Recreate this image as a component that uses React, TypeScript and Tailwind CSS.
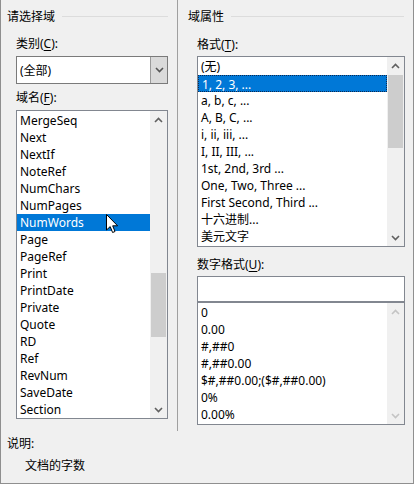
import React from 'react'

// Word "域" (field) dialog, left/right panes.

type Thumb = { offset: number; height: number } | null

function Chevron({ up, color }: { up?: boolean; color: string }) {
  return (
    <svg width="9" height="6" viewBox="0 0 9 6" className="block">
      <polyline
        points={up ? '1,5 4.5,1.5 8,5' : '1,1 4.5,4.5 8,1'}
        fill="none"
        stroke={color}
        strokeWidth="1.6"
      />
    </svg>
  )
}

function ScrollBar({ thumb, disabled }: { thumb: Thumb; disabled?: boolean }) {
  const arrow = disabled ? '#c4c4c4' : '#606060'
  return (
    <div className="w-[17px] shrink-0 flex flex-col bg-[#f0f0f0]">
      <div className="h-[17px] flex items-center justify-center">
        <Chevron up color={arrow} />
      </div>
      <div className="flex-1 flex flex-col">
        {thumb && (
          <>
            <div style={{ height: thumb.offset }} />
            <div className="mx-[1px] bg-[#cdcdcd]" style={{ height: thumb.height }} />
          </>
        )}
      </div>
      <div className="h-[17px] flex items-center justify-center">
        <Chevron color={arrow} />
      </div>
    </div>
  )
}

function ListBox({
  items,
  selected,
  focusRing,
  thumb,
  disabled,
  className,
}: {
  items: string[]
  selected?: number
  focusRing?: boolean
  thumb: Thumb
  disabled?: boolean
  className: string
}) {
  return (
    <div className={`flex border border-[#828790] bg-white ${className}`}>
      <div className="flex-1 min-w-0 pt-[1px]">
        {items.map((it, i) => (
          <div
            key={it}
            className={`h-[17px] leading-[17px] pl-[3px] whitespace-nowrap ${
              i === selected
                ? `bg-[#0078d7] text-white ${focusRing ? 'border border-dotted border-[#0d2a52] pl-[2px] leading-[15px]' : ''}`
                : ''
            }`}
          >
            {it}
          </div>
        ))}
      </div>
      <ScrollBar thumb={thumb} disabled={disabled} />
    </div>
  )
}

function GroupTitle({ text, pad }: { text: string; pad: string }) {
  return (
    <div className={`mt-[8px] h-[17px] flex items-center ${pad}`}>
      <span>{text}</span>
      <div className="flex-1 ml-[7px] border-t border-[#dcdcdc]" />
    </div>
  )
}

const fieldNames = [
  'MergeSeq',
  'Next',
  'NextIf',
  'NoteRef',
  'NumChars',
  'NumPages',
  'NumWords',
  'Page',
  'PageRef',
  'Print',
  'PrintDate',
  'Private',
  'Quote',
  'RD',
  'Ref',
  'RevNum',
  'SaveDate',
  'Section',
]

const formats = [
  '(无)',
  '1, 2, 3, ...',
  'a, b, c, ...',
  'A, B, C, ...',
  'i, ii, iii, ...',
  'I, II, III, ...',
  '1st, 2nd, 3rd ...',
  'One, Two, Three ...',
  'First Second, Third ...',
  '十六进制...',
  '美元文字',
]

const numberFormats = ['0', '0.00', '#,##0', '#,##0.00', '$#,##0.00;($#,##0.00)', '0%', '0.00%']

export default function App() {
  return (
    <div className="w-[414px] h-[484px] bg-[#f0f0f0] border-l border-r border-b border-[#8f8f8f] text-[12px] leading-[17px] text-black font-['Noto_Sans','Noto_Sans_CJK_SC',sans-serif] relative">
      <div className="flex h-[431px]">
        {/* Left: 请选择域 */}
        <div className="w-[176px] shrink-0 flex flex-col">
          <GroupTitle text="请选择域" pad="pl-[6px] pr-[9px]" />
          <div className="mt-[10px] h-[17px] pl-[15px]">
            类别(<u className="underline-offset-2">C</u>):
          </div>
          <div className="mt-[4px] ml-[15px] w-[152px] h-[28px] flex border border-[#7a7a7a] bg-white">
            <div className="flex-1 pl-[3px] flex items-center">(全部)</div>
            <div className="w-[17px] flex items-center justify-center bg-[#dadada] border-l border-[#9a9a9a]">
              <Chevron color="#555" />
            </div>
          </div>
          <div className="mt-[5px] h-[17px] pl-[15px]">
            域名(<u className="underline-offset-2">F</u>):
          </div>
          <ListBox
            className="mt-[4px] ml-[15px] w-[152px] h-[309px]"
            items={fieldNames}
            selected={6}
            thumb={{ offset: 145, height: 64 }}
          />
        </div>

        {/* divider */}
        <div className="w-px bg-[#a0a0a0]" />

        {/* Right: 域属性 */}
        <div className="flex-1 flex flex-col">
          <GroupTitle text="域属性" pad="pl-[10px] pr-[9px]" />
          <div className="mt-[11px] h-[17px] pl-[19px]">
            格式(<u className="underline-offset-2">T</u>):
          </div>
          <ListBox
            className="mt-[3px] ml-[19px] w-[208px] h-[191px]"
            items={formats}
            selected={1}
            focusRing
            thumb={{ offset: 1, height: 73 }}
          />
          <div className="mt-[9px] h-[17px] pl-[19px]">
            数字格式(<u className="underline-offset-2">U</u>):
          </div>
          <div className="mt-[3px] ml-[19px] w-[208px] h-[26px] border border-[#828790] bg-white" />
          <ListBox
            className="ml-[19px] w-[208px] h-[123px]"
            items={numberFormats}
            thumb={null}
            disabled
          />
        </div>
      </div>

      <div className="mt-[4px] h-[17px] pl-[6px]">说明:</div>
      <div className="mt-[5px] h-[17px] pl-[24px]">文档的字数</div>

      {/* mouse pointer over NumWords */}
      <svg
        width="13"
        height="20"
        viewBox="0 0 13 20"
        className="absolute left-[105px] top-[214px]"
      >
        <path
          d="M0.5 0.5 L0.5 16 L4.2 12.6 L6.6 18.5 L9 17.5 L6.7 11.8 L11.6 11.8 Z"
          fill="white"
          stroke="black"
          strokeWidth="1"
          strokeLinejoin="miter"
        />
      </svg>
    </div>
  )
}
